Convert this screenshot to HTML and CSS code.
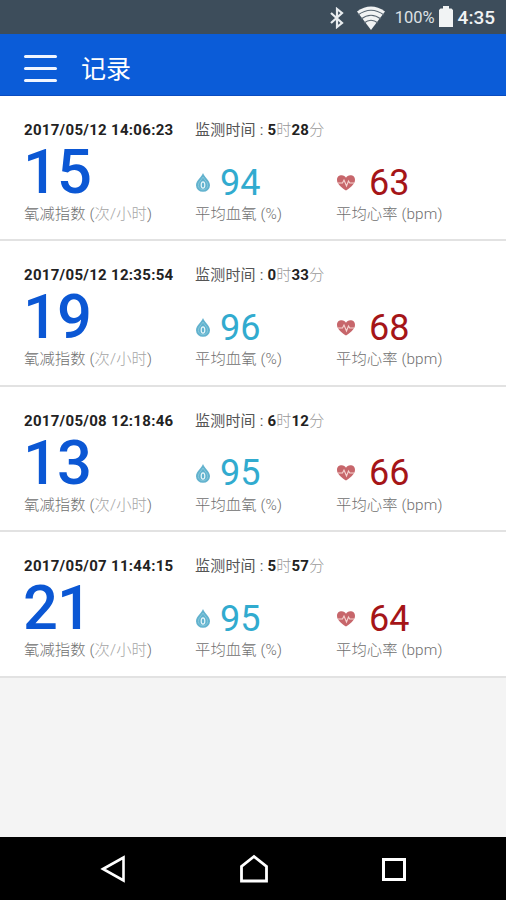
FILE: index.html
```html
<!DOCTYPE html>
<html lang="zh-CN">
<head>
    <meta charset="UTF-8">
    <meta name="viewport" content="width=device-width, initial-scale=1.0">
    <title>记录</title>
    <link rel="stylesheet" href="styles.css">
</head>
<body>
    <!-- Shared icons -->
    <svg class="sprite" width="0" height="0">
        <symbol id="drop" viewBox="0 0 14 19">
            <path d="M7 0C6 3.500 0 7.500 0 12.300a7 6.500 0 0 0 14 0C14 7.500 8 3.500 7 0z" fill="#62b2ce"/>
            <path d="M7 4C5.500 7 2.300 9 2.300 12.300a4.700 4.500 0 0 0 9.400 0C11.700 9 8.500 7 7 4z" fill="none" stroke="#8ccbdd" stroke-width=".8"/>
            <ellipse cx="7" cy="12" rx="1.800" ry="3.200" fill="none" stroke="#e6f5f9" stroke-width="1.200"/>
        </symbol>
        <symbol id="heart" viewBox="0 0 18 16">
            <path d="M9 15.500C6 13.500 0 9.500 0 5 0 1.500 2.200 .2 4.600 .2 6.700 .2 8.200 1.200 9 2.700 9.800 1.200 11.300 .2 13.400 .2 15.800 .2 18 1.500 18 5c0 4.500-6 8.500-9 10.500z" fill="#c7666b"/>
            <path d="M1 8h4.500l1.500-3 2.500 6 2-5 1.200 2H17" fill="none" stroke="#f6d5d2" stroke-width="1.100"/>
        </symbol>
    </svg>

    <div class="status-bar">
        <svg class="bluetooth" width="16" height="22" viewBox="0 0 16 22">
            <path d="M2 6l11 10-5 4V2l5 4L2 16" fill="none" stroke="#e8ecef" stroke-width="2.200"/>
        </svg>
        <svg class="wifi" width="28" height="24" viewBox="0 0 28 24">
            <path d="M0 5.500Q14-4.500 28 5.500L14 24z" fill="#f1f3f4"/>
            <path d="M1 9Q14-.5 27 9M4 13Q14 5.500 24 13M7 17Q14 11.500 21 17" fill="none" stroke="#596672" stroke-width="1.100"/>
        </svg>
        <span class="percent">100%</span>
        <svg class="battery" width="14" height="21" viewBox="0 0 14 21">
            <path d="M4 0h6v2.500h2.500L14 4v17H0V4l1.500-1.500H4z" fill="#f1f3f4"/>
        </svg>
        <span class="clock">4:35</span>
    </div>

    <header class="app-bar">
        <div class="menu"><i></i><i></i><i></i></div>
        <h1>记录</h1>
    </header>

    <main class="records">
        <section class="record">
            <div class="col">
                <div class="date">2017/05/12 14:06:23</div>
                <div class="score">15</div>
                <div class="label">氧减指数 (<span>次/小时</span>)</div>
            </div>
            <div class="col">
                <div class="duration">监测时间 : <b>5</b><span>时</span><b>28</b><span>分</span></div>
                <div class="value oxygen"><svg class="drop"><use href="#drop"/></svg>94</div>
                <div class="label">平均血氧 (%)</div>
            </div>
            <div class="col">
                <div class="value pulse"><svg class="heart"><use href="#heart"/></svg>63</div>
                <div class="label">平均心率 (bpm)</div>
            </div>
        </section>
        <section class="record">
            <div class="col">
                <div class="date">2017/05/12 12:35:54</div>
                <div class="score">19</div>
                <div class="label">氧减指数 (<span>次/小时</span>)</div>
            </div>
            <div class="col">
                <div class="duration">监测时间 : <b>0</b><span>时</span><b>33</b><span>分</span></div>
                <div class="value oxygen"><svg class="drop"><use href="#drop"/></svg>96</div>
                <div class="label">平均血氧 (%)</div>
            </div>
            <div class="col">
                <div class="value pulse"><svg class="heart"><use href="#heart"/></svg>68</div>
                <div class="label">平均心率 (bpm)</div>
            </div>
        </section>
        <section class="record">
            <div class="col">
                <div class="date">2017/05/08 12:18:46</div>
                <div class="score">13</div>
                <div class="label">氧减指数 (<span>次/小时</span>)</div>
            </div>
            <div class="col">
                <div class="duration">监测时间 : <b>6</b><span>时</span><b>12</b><span>分</span></div>
                <div class="value oxygen"><svg class="drop"><use href="#drop"/></svg>95</div>
                <div class="label">平均血氧 (%)</div>
            </div>
            <div class="col">
                <div class="value pulse"><svg class="heart"><use href="#heart"/></svg>66</div>
                <div class="label">平均心率 (bpm)</div>
            </div>
        </section>
        <section class="record">
            <div class="col">
                <div class="date">2017/05/07 11:44:15</div>
                <div class="score">21</div>
                <div class="label">氧减指数 (<span>次/小时</span>)</div>
            </div>
            <div class="col">
                <div class="duration">监测时间 : <b>5</b><span>时</span><b>57</b><span>分</span></div>
                <div class="value oxygen"><svg class="drop"><use href="#drop"/></svg>95</div>
                <div class="label">平均血氧 (%)</div>
            </div>
            <div class="col">
                <div class="value pulse"><svg class="heart"><use href="#heart"/></svg>64</div>
                <div class="label">平均心率 (bpm)</div>
            </div>
        </section>
    </main>

    <nav class="nav-bar">
        <svg width="28" height="30" viewBox="0 0 28 30">
            <path d="M4 15L24.500 3.500v23z" fill="none" stroke="#fff" stroke-width="2.600"/>
        </svg>
        <svg width="30" height="30" viewBox="0 0 30 30">
            <path d="M2.500 27V12.500L15 2.500l12.500 10V27z" fill="none" stroke="#fff" stroke-width="2.800"/>
        </svg>
        <svg width="26" height="30" viewBox="0 0 26 30">
            <path d="M2.500 5.500h21v20h-21z" fill="none" stroke="#fff" stroke-width="3"/>
        </svg>
    </nav>
</body>
</html>
```

FILE: styles.css
```css
/* General Styles */
body {
    margin: 0;
    height: 900px;
    display: flex;
    flex-direction: column;
    overflow: hidden;
    background: #f4f4f4;
    font-family: Roboto, "Noto Sans CJK SC", sans-serif;
}

svg {
    display: block;
    flex: none;
}

.sprite {
    position: absolute;
}

/* Status Bar */
.status-bar {
    height: 34px;
    flex: none;
    display: flex;
    align-items: center;
    box-sizing: border-box;
    padding: 1px 11px 0 0;
    justify-content: flex-end;
    background: #3d4d5b;
    color: #f1f3f4;
}

.wifi {
    margin: 0 10px 0 12px;
}

.percent {
    font-size: 16.5px;
    color: #dde1e4;
}

.battery {
    margin: 0 5px 2px 4px;
}

.clock {
    font-size: 19px;
    font-weight: 500;
}

/* App Bar */
.app-bar {
    height: 62px;
    flex: none;
    display: flex;
    align-items: center;
    box-sizing: border-box;
    padding: 8px 24px 0;
    border-bottom: 1px solid #0a4cc0;
    background: #0b5cd8;
    color: #fff;
}

.menu {
    width: 33px;
    display: flex;
    flex-direction: column;
    gap: 9px;
}

.menu i {
    height: 3px;
    border-radius: 2px;
    background: #f0f5ff;
}

h1 {
    margin: 0 0 0 24px;
    padding-top: 2px;
    font-size: 25px;
    font-weight: 400;
    line-height: 36px;
}

/* Records */
.records {
    flex: 1;
}

.record {
    height: 145.400px;
    display: grid;
    grid-template-columns: 171px 141px 1fr;
    box-sizing: border-box;
    padding: 24px 0 0 24px;
    border-bottom: 2px solid #e2e2e2;
    background: #fff;
    white-space: nowrap;
}

.col {
    display: flex;
    flex-direction: column;
    justify-content: flex-end;
    height: 104px;
}

.date,
.duration {
    height: 20px;
    line-height: 20px;
    font-size: 15px;
    color: #222;
}

.date {
    font-weight: 700;
    letter-spacing: 0.3px;
}

.duration {
    color: #555;
    font-weight: 400;
    letter-spacing: 0.2px;
}

.duration b {
    color: #222;
}

.duration span {
    color: #999;
    font-weight: 300;
}

.score {
    height: 64px;
    margin-left: -1px;
    line-height: 65px;
    font-size: 61.5px;
    font-weight: 500;
    letter-spacing: -1px;
    color: #0b57d4;
}

.value {
    height: 64px;
    display: flex;
    align-items: center;
    box-sizing: border-box;
    padding-top: 21px;
    line-height: 42px;
    font-size: 36px;
}

.oxygen {
    color: #31abcf;
}

.pulse {
    color: #a51518;
}

.drop {
    width: 14px;
    height: 19px;
    margin: 0 10px 0 1px;
}

.heart {
    width: 18px;
    height: 16px;
    margin: 0 14px 0 1px;
}

.label {
    height: 20px;
    line-height: 20px;
    font-size: 15.3px;
    font-weight: 300;
    letter-spacing: 0.12px;
    color: #707070;
}

.label span {
    color: #a5a5a5;
}

/* Navigation Bar */
.nav-bar {
    height: 63px;
    flex: none;
    display: flex;
    align-items: center;
    justify-content: space-between;
    box-sizing: border-box;
    padding: 1px 99px 0;
    background: #000;
}
```
